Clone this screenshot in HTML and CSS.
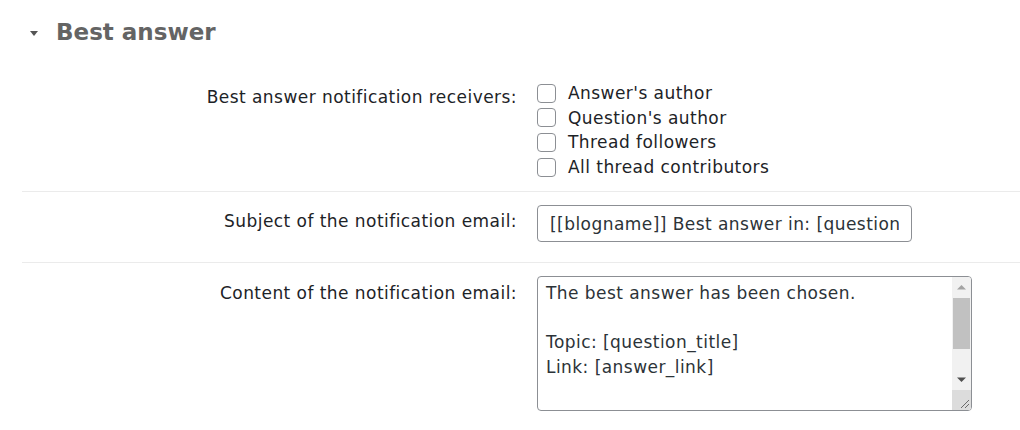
FILE: index.html
```html
<!DOCTYPE html>
<html lang="en">
<head>
    <meta charset="UTF-8">
    <meta name="viewport" content="width=device-width, initial-scale=1.0">
    <title>Best answer</title>
    <link rel="stylesheet" href="styles.css">
</head>
<body>
    <div id="section">
        <h2 class="section-title"><span class="caret"></span>Best answer</h2>

        <div class="row receivers">
            <div class="label">Best answer notification receivers:</div>
            <div class="field">
                <label class="check"><input type="checkbox"> Answer's author</label>
                <label class="check"><input type="checkbox"> Question's author</label>
                <label class="check"><input type="checkbox"> Thread followers</label>
                <label class="check"><input type="checkbox"> All thread contributors</label>
            </div>
        </div>

        <div class="row subject">
            <div class="label">Subject of the notification email:</div>
            <div class="field">
                <input type="text" class="text-input" value="[[blogname]] Best answer in: [question_title]">
            </div>
        </div>

        <div class="row content last">
            <div class="label">Content of the notification email:</div>
            <div class="field">
                <div class="area-wrap">
                    <textarea class="text-area">The best answer has been chosen.

Topic: [question_title]
Link: [answer_link]


[blogname]</textarea>
                    <!-- scrollbar drawn by hand, the browser hides the real one -->
                    <div class="scrollbar">
                        <div class="sb-btn">
                            <svg width="19" height="21" viewBox="0 0 19 21"><path d="M5 12.5 L9.5 8 L14 12.5 Z" fill="#a3a3a3"/></svg>
                        </div>
                        <div class="sb-track"><div class="sb-thumb"></div></div>
                        <div class="sb-btn">
                            <svg width="19" height="21" viewBox="0 0 19 21"><path d="M5 8.5 L14 8.5 L9.5 13 Z" fill="#505050"/></svg>
                        </div>
                        <div class="sb-corner">
                            <svg width="19" height="20" viewBox="0 0 19 20"><path d="M17 10 L9 18 M17 14 L13 18" stroke="#6a6a6a" stroke-width="1"/></svg>
                        </div>
                    </div>
                </div>
            </div>
        </div>
    </div>
</body>
</html>
```

FILE: styles.css
```css
body{
    margin:0;
    background:#fff;
    font-family:"DejaVu Sans", Verdana, sans-serif;
    font-size:17px;
    letter-spacing:0.45px;
    color:#1d2327;
}
#section{
    padding:0 0 0 22px;
}
.section-title{
    display:flex;
    align-items:center;
    margin:0;
    padding:17px 0 0 8px;
    height:30px;
    font-size:23px;
    letter-spacing:0;
    font-weight:bold;
    color:#646464;
}
.caret{
    width:0;
    height:0;
    border-left:4px solid transparent;
    border-right:4px solid transparent;
    border-top:5px solid #555;
    margin-right:18px;
    margin-top:2px;
}
.row{
    display:grid;
    grid-template-columns:495px 1fr;
    column-gap:20px;
    border-bottom:1px solid #ebebeb;
}
.row.last{
    border-bottom:none;
}
.label{
    text-align:right;
    line-height:24px;
}
.receivers{
    padding:34px 0 12px 0;
}
.receivers .label{
    padding-top:4px;
}
.subject{
    padding:13px 0 20px 0;
}
.subject .label{
    padding-top:4px;
}
.content{
    padding:13px 0 10px 0;
}
.content .label{
    padding-top:5px;
}
.field{
    display:flex;
    flex-direction:column;
}
.check{
    display:flex;
    align-items:center;
    height:24.6px;
}
.check input{
    appearance:none;
    -webkit-appearance:none;
    width:19px;
    height:19px;
    margin:0 12px 0 0;
    border:1px solid #8c8f94;
    border-radius:4px;
    background:#fff;
}
.text-input{
    box-sizing:border-box;
    width:375px;
    height:37px;
    padding:0 12px;
    border:1px solid #8c8f94;
    border-radius:4px;
    font-family:"DejaVu Sans", Verdana, sans-serif;
    font-size:17px;
    letter-spacing:0.45px;
    color:#2c3338;
}
.area-wrap{
    position:relative;
    width:435px;
    height:135px;
}
.text-area{
    display:block;
    box-sizing:border-box;
    width:435px;
    height:135px;
    padding:4px 27px 4px 8px;
    border:1px solid #8c8f94;
    border-radius:4px;
    font-family:"DejaVu Sans", Verdana, sans-serif;
    font-size:17px;
    letter-spacing:0.45px;
    line-height:24.5px;
    color:#2c3338;
    overflow:hidden;
    resize:none;
}
.scrollbar{
    position:absolute;
    top:1px;
    right:1px;
    bottom:1px;
    width:19px;
    display:flex;
    flex-direction:column;
    background:#f1f1f1;
    border-radius:0 3px 3px 0;
    overflow:hidden;
}
.sb-btn{
    height:21px;
    flex:none;
}
.sb-btn svg, .sb-corner svg{
    display:block;
}
.sb-track{
    flex:1;
    padding:0 1px;
}
.sb-thumb{
    height:51px;
    background:#c1c1c1;
}
.sb-corner{
    height:20px;
    flex:none;
    background:#dcdcdc;
}
```
